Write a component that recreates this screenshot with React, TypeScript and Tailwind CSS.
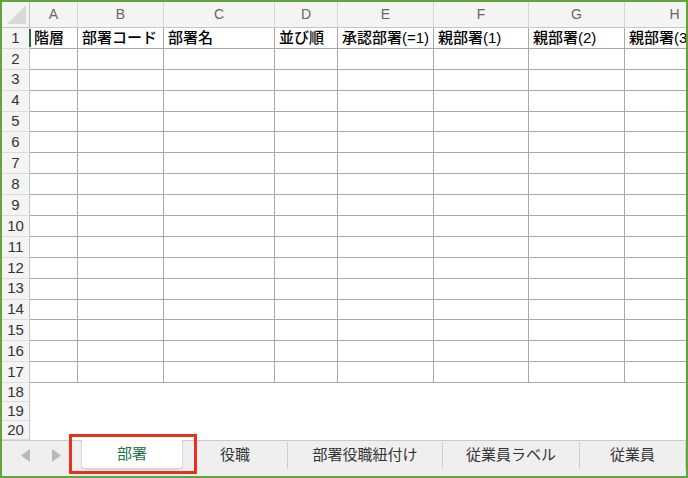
const COLUMNS = [
  { letter: "A", width: "w-[48px]", title: "階層" },
  { letter: "B", width: "w-[86px]", title: "部署コード" },
  { letter: "C", width: "w-[111px]", title: "部署名" },
  { letter: "D", width: "w-[63px]", title: "並び順" },
  { letter: "E", width: "w-[96px]", title: "承認部署(=1)" },
  { letter: "F", width: "w-[95px]", title: "親部署(1)" },
  { letter: "G", width: "w-[96px]", title: "親部署(2)" },
  { letter: "H", width: "w-[100px]", title: "親部署(3)" },
];

const TABLE_ROWS = Array.from({ length: 17 }, (_, i) => i + 1);
const EMPTY_ROWS = [18, 19, 20];

const SHEETS = [
  { name: "役職", width: "w-[105px]" },
  { name: "部署役職紐付け", width: "w-[155px]" },
  { name: "従業員ラベル", width: "w-[137px]" },
  { name: "従業員", width: "w-[106px]" },
];

const font = "font-['Liberation_Sans','Noto_Sans_CJK_JP',sans-serif]";

function RowHeader({ n, tall }: { n: number; tall: boolean }) {
  return (
    <div
      className={`relative flex w-[28px] shrink-0 items-center justify-center border-r border-b border-r-[#c6c6c6] border-b-[#dcdcdc] bg-[#f4f4f4] text-[15px] text-[#333] ${
        tall ? "h-[20.9px]" : "h-[19px]"
      }`}
    >
      {n}
      {n === 1 ? <span className="absolute right-[-2px] top-[1px] bottom-[1px] w-[2px] bg-[#217346]" /> : null}
    </div>
  );
}

export default function App() {
  return (
    <div className={`relative flex h-[478px] w-[688px] flex-col overflow-hidden border-2 border-[#62a33a] bg-white ${font}`}>
      {/* column letters */}
      <div className="flex h-[26px] shrink-0 bg-[#f4f4f4]">
        <div className="flex w-[28px] shrink-0 items-end justify-end border-r border-b border-[#c6c6c6] pb-[3px] pr-[3px]">
          <svg width="19" height="19" viewBox="0 0 19 19" aria-hidden>
            <polygon points="19,0 19,19 0,19" fill="#d9d9d9" />
          </svg>
        </div>
        {COLUMNS.map((col) => (
          <div
            key={col.letter}
            className={`${col.width} flex shrink-0 items-center justify-center border-r border-b border-r-[#d6d6d6] border-b-[#c6c6c6] text-[14px] text-[#666]`}
          >
            {col.letter}
          </div>
        ))}
      </div>

      {/* table rows */}
      {TABLE_ROWS.map((n) => (
        <div key={n} className="flex shrink-0">
          <RowHeader n={n} tall />
          {COLUMNS.map((col) => (
            <div
              key={col.letter}
              className={`${col.width} flex h-[20.9px] shrink-0 items-center overflow-hidden whitespace-nowrap border-r border-b border-[#a9a9a9] pl-[4px] text-[15px] font-medium text-black`}
            >
              {n === 1 ? col.title : null}
            </div>
          ))}
        </div>
      ))}

      {EMPTY_ROWS.map((n) => (
        <div key={n} className="flex shrink-0">
          <RowHeader n={n} tall={false} />
        </div>
      ))}

      {/* sheet tabs */}
      <div className="flex flex-1 border-t border-[#c9c9c9] bg-[#efefef]">
        <div className="flex w-[79px] shrink-0 items-center gap-[22px] pl-[19px] pb-[6px]">
          <svg width="9" height="13" viewBox="0 0 9 13" aria-hidden>
            <polygon points="9,0 9,13 0,6.5" fill="#b9b9b9" />
          </svg>
          <svg width="9" height="13" viewBox="0 0 9 13" aria-hidden>
            <polygon points="0,0 0,13 9,6.5" fill="#b9b9b9" />
          </svg>
        </div>
        <div className="mt-[-1px] flex h-[29px] w-[102px] shrink-0 items-center justify-center rounded-b-[4px] border border-t-0 border-[#d8d8d8] bg-white text-[15px] text-[#217346] shadow-[0_1px_1px_rgba(0,0,0,0.1)]">
          部署
        </div>
        {SHEETS.map((sheet) => (
          <div key={sheet.name} className={`${sheet.width} flex shrink-0 items-start pt-[1px]`}>
            <div className="flex h-[27px] w-full items-center justify-center border-r border-[#cfcfcf] text-[15px] text-[#333]">
              {sheet.name}
            </div>
          </div>
        ))}
      </div>

      {/* highlight around the active sheet */}
      <div className="pointer-events-none absolute left-[67px] top-[432px] h-[40px] w-[128px] border-[3px] border-[#e8321e]" />
    </div>
  );
}
